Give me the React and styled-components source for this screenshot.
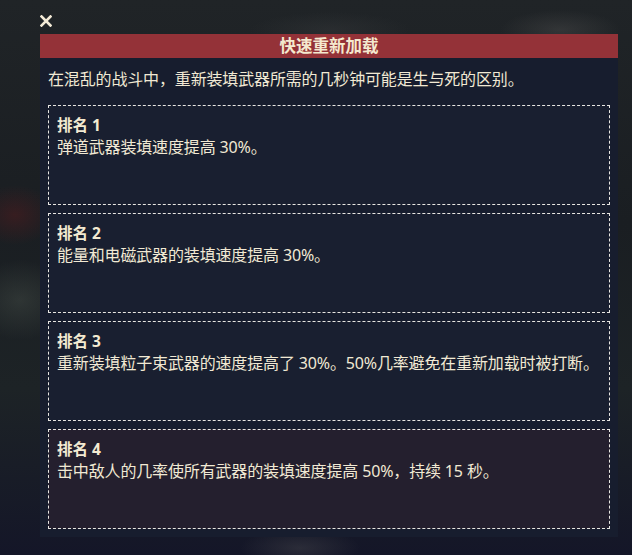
import styled, { createGlobalStyle } from "styled-components"

const GlobalStyle = createGlobalStyle`
    html, body {
        margin: 0;
        padding: 0;
        background: #1b1f24;
    }
    body {
        font-family: "Noto Sans", "Noto Sans CJK SC", sans-serif;
    }
`

const ranks = [
    { rank: 1, text: "弹道武器装填速度提高 30%。" },
    { rank: 2, text: "能量和电磁武器的装填速度提高 30%。" },
    { rank: 3, text: "重新装填粒子束武器的速度提高了 30%。50%几率避免在重新加载时被打断。" },
    { rank: 4, text: "击中敌人的几率使所有武器的装填速度提高 50%，持续 15 秒。", active: true },
]

export default function App() {
    return (
        <Screen>
            <GlobalStyle />
            <CloseButton aria-label="close">
                <svg width="12" height="12" viewBox="0 0 12 12">
                    <path d="M1.5 1.5 L10.5 10.5 M10.5 1.5 L1.5 10.5" stroke="#f3ead6" strokeWidth="2.6" strokeLinecap="square" />
                </svg>
            </CloseButton>
            <Panel>
                <Header>快速重新加载</Header>
                <Body>
                    <Description>在混乱的战斗中，重新装填武器所需的几秒钟可能是生与死的区别。</Description>
                    <RankList>
                        {ranks.map(r => (
                            <RankCard key={r.rank} $active={r.active}>
                                <RankTitle>排名 {r.rank}</RankTitle>
                                <RankText>{r.text}</RankText>
                            </RankCard>
                        ))}
                    </RankList>
                </Body>
            </Panel>
        </Screen>
    )
}

const Screen = styled.div`
    width: 632px;
    height: 555px;
    overflow: hidden;
    box-sizing: border-box;
    padding: 14px 14px 0 40px;
    background:
        radial-gradient(ellipse 40px 30px at 15px 215px, rgba(90, 28, 30, 0.45), transparent),
        radial-gradient(ellipse 50px 40px at 20px 300px, rgba(70, 78, 72, 0.45), transparent),
        radial-gradient(ellipse 60px 20px at 560px 30px, rgba(80, 80, 80, 0.4), transparent),
        radial-gradient(ellipse 80px 18px at 330px 30px, rgba(60, 62, 64, 0.35), transparent),
        radial-gradient(ellipse 60px 20px at 300px 548px, rgba(70, 70, 76, 0.45), transparent),
        linear-gradient(180deg, #202427 0%, #1a1e22 40%, #1d2326 70%, #141628 100%);
`

const CloseButton = styled.div`
    width: 12px;
    height: 14px;
    display: flex;
    align-items: center;
    margin-bottom: 6px;
`

const Panel = styled.div`
    width: 578px;
    background: #171d2e;
    display: flex;
    flex-direction: column;
`

const Header = styled.div`
    height: 24px;
    background: #943238;
    color: #f4e9cf;
    font-weight: 700;
    font-size: 16.5px;
    line-height: 24px;
    text-align: center;
`

const Body = styled.div`
    padding: 10px 8px 8px;
`

const Description = styled.p`
    margin: 0 0 15px;
    color: #f1e9d4;
    font-size: 16px;
    line-height: 22px;
    letter-spacing: -0.15px;
`

const RankList = styled.div`
    display: flex;
    flex-direction: column;
    gap: 8px;
`

const RankCard = styled.div`
    height: 100px;
    box-sizing: border-box;
    border: 1px dashed #e8e6e2;
    background: ${p => (p.$active ? "#241f2e" : "#191f30")};
    padding: 8px 8px;
`

const RankTitle = styled.div`
    color: #f3ead2;
    font-weight: 700;
    font-size: 15.5px;
    line-height: 22px;
`

const RankText = styled.div`
    color: #f1e9d4;
    font-size: 16px;
    line-height: 22px;
    letter-spacing: -0.15px;
`
